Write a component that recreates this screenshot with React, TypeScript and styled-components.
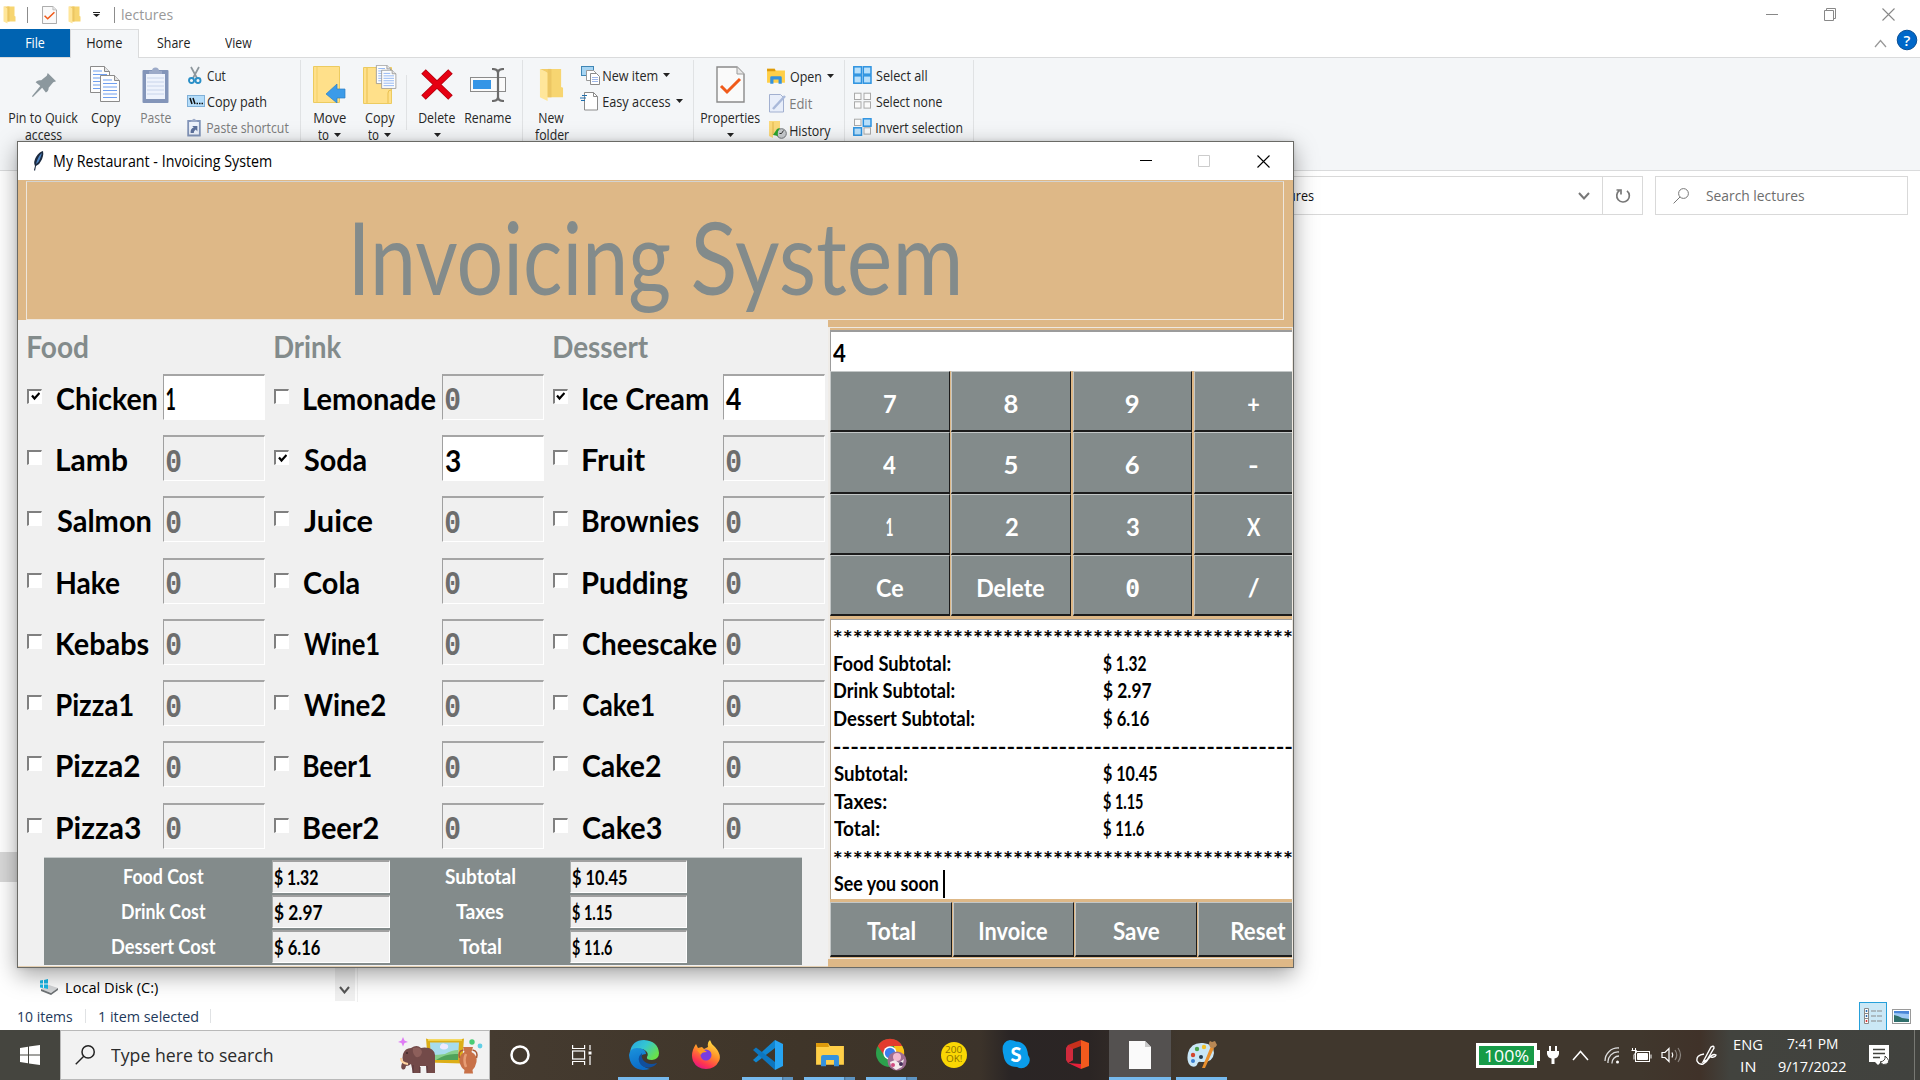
import React, { useLayoutEffect, useRef, useState } from "react";
import styled, { createGlobalStyle, css } from "styled-components";

const UI = '"Open Sans", "Noto Sans", sans-serif';
const TK = 'Lato, "Open Sans", sans-serif';
const MONO = '"Liberation Mono", "DejaVu Sans Mono", monospace';
const WOOD = "#deb887";
const AZURE = "#838b8b";

const Global = createGlobalStyle`
  * { box-sizing: border-box; }
  body { margin: 0; width: 1920px; height: 1080px; overflow: hidden; background: #fff; font-family: ${UI}; font-size: 15px; color: #1e1e1e; }
  svg { display: block; flex: none; }
`;

/* ---------- text that is set to an exact ink width ---------- */
const TextBox = styled.span<{ $w: number; $ml?: number }>`
  display: block;
  flex: none;
  width: ${(p) => p.$w}px;
  margin-left: ${(p) => p.$ml ?? 0}px;
  line-height: 0;
  white-space: pre;
`;
const TextInk = styled.span<{ $size: number; $color?: string; $family?: string; $weight?: number; $lh?: number }>`
  display: inline-block;
  vertical-align: top;
  transform-origin: 0 50%;
  font-family: ${(p) => p.$family ?? UI};
  font-size: ${(p) => p.$size}px;
  font-weight: ${(p) => p.$weight ?? 400};
  line-height: ${(p) => p.$lh ?? 17}px;
  color: ${(p) => p.$color ?? "inherit"};
`;
type TProps = { w: number; ml?: number; dy?: number; size?: number; color?: string; family?: string; weight?: number; lh?: number; children: string };
function T({ w, ml, dy = 0, size = 15, color, family, weight, lh, children }: TProps) {
  const ref = useRef<HTMLSpanElement>(null);
  const [tf, setTf] = useState("none");
  useLayoutEffect(() => {
    const cs = getComputedStyle(ref.current!);
    const ctx = document.createElement("canvas").getContext("2d")!;
    ctx.font = `${cs.fontWeight} ${cs.fontSize} ${cs.fontFamily}`;
    const m = ctx.measureText(children);
    const k = w / (m.actualBoundingBoxLeft + m.actualBoundingBoxRight);
    setTf(`translate(${m.actualBoundingBoxLeft * k}px, ${dy}px) scaleX(${k})`);
  }, [w, dy, children]);
  return (
    <TextBox $w={w} $ml={ml}>
      <TextInk ref={ref} $size={size} $color={color} $family={family} $weight={weight} $lh={lh} style={{ transform: tf }}>
        {children}
      </TextInk>
    </TextBox>
  );
}

/* ---------- explorer ---------- */
const Desktop = styled.div`
  position: relative;
  display: flex;
  flex-direction: column;
  width: 1920px;
  height: 1080px;
  overflow: hidden;
  background: #fff;
`;
const Bar = styled.div<{ $h: number }>`
  display: flex;
  flex: none;
  height: ${(p) => p.$h}px;
`;
const TitleBar = styled(Bar)`
  align-items: center;
  padding: 0 25px 0 3px;
`;
const Gap = styled.div<{ $w?: number; $h?: number }>`
  flex: ${(p) => (p.$w === undefined && p.$h === undefined ? "1" : "none")};
  width: ${(p) => p.$w ?? 0}px;
  height: ${(p) => p.$h ?? 0}px;
`;
const VLine = styled.div<{ $h: number; $c?: string }>`
  flex: none;
  width: 1px;
  height: ${(p) => p.$h}px;
  background: ${(p) => p.$c ?? "#e0e2e4"};
`;
const TabRow = styled(Bar)`
  border-bottom: 1px solid #dadbdc;
`;
const Tab = styled.div<{ $w: number; $kind?: "file" | "active" }>`
  display: flex;
  justify-content: center;
  width: ${(p) => p.$w}px;
  padding-top: 5px;
  ${(p) => p.$kind === "file" && css`background: #0063b1; color: #fff;`}
  ${(p) => p.$kind === "active" && css`background: #f4f6f8; border: 1px solid #dadbdc; border-bottom: 0; margin-bottom: -1px; padding-top: 4px;`}
`;
const Ribbon = styled(Bar)`
  background: #f4f6f8;
  border-bottom: 1px solid #dadbdc;
  padding-top: 2px;
`;
const Group = styled.div<{ $w: number }>`
  display: flex;
  width: ${(p) => p.$w}px;
  border-right: 1px solid #e0e2e4;
`;
const BigBtn = styled.div<{ $w: number; $muted?: boolean }>`
  display: flex;
  flex-direction: column;
  align-items: center;
  flex: none;
  width: ${(p) => p.$w}px;
  color: ${(p) => (p.$muted ? "#7c7c7c" : "#262626")};
`;
const BigIcon = styled.div`
  display: flex;
  align-items: center;
  justify-content: center;
  height: 49px;
  margin-bottom: -2px;
`;
const Caption = styled.div`
  display: flex;
  align-items: center;
  gap: 5px;
  height: 17px;
`;
const Collapse = styled.div`
  display: flex;
  align-items: center;
`;
const SmallCol = styled.div<{ $pt?: number; $pitch?: number }>`
  display: flex;
  flex-direction: column;
  gap: ${(p) => (p.$pitch ?? 26) - 20}px;
  padding-top: ${(p) => p.$pt ?? 5}px;
`;
const SmallBtn = styled.div<{ $muted?: boolean }>`
  display: flex;
  align-items: center;
  height: 20px;
  color: ${(p) => (p.$muted ? "#7c7c7c" : "#262626")};
`;
const SmallIcon = styled.div<{ $w: number }>`
  display: flex;
  justify-content: flex-start;
  width: ${(p) => p.$w}px;
`;
const NavRow = styled(Bar)`
  padding: 5px 12px 0 15px;
  justify-content: flex-end;
  gap: 12px;
`;
const Address = styled.div`
  display: flex;
  align-items: center;
  width: 1443px;
  height: 39px;
  border: 1px solid #d9d9d9;
`;
const Refresh = styled.div`
  display: flex;
  align-items: center;
  justify-content: center;
  width: 40px;
  height: 37px;
  border-left: 1px solid #d9d9d9;
`;
const Search = styled.div`
  display: flex;
  align-items: center;
  width: 253px;
  height: 39px;
  padding-left: 17px;
  border: 1px solid #d9d9d9;
`;
const Content = styled.div`
  display: flex;
  flex: 1;
`;
const Tree = styled.div`
  display: flex;
  flex-direction: column;
  justify-content: flex-end;
  width: 335px;
`;
const SelectedRow = styled.div`
  height: 30px;
  margin-bottom: 90px;
  background: #d9d9d9;
`;
const TreeRow = styled.div`
  display: flex;
  align-items: center;
  height: 30px;
  padding-left: 39px;
  color: #000;
`;
const ScrollTrack = styled.div`
  display: flex;
  align-items: flex-end;
  justify-content: center;
  width: 20px;
  margin-bottom: 1px;
  padding: 0 1px 7px 0;
  background: #f0f0f0;
`;
const PaneEdge = styled.div`
  width: 3px;
  border-right: 1px solid #f0f0f0;
`;
const Status = styled(Bar)`
  align-items: center;
  padding: 0 9px 0 18px;
  color: #1e395b;
`;
const ViewBtn = styled.div`
  display: flex;
  align-items: center;
  justify-content: center;
  width: 28px;
  height: 29px;
  margin-right: 5px;
  border: 1px solid #26a0da;
  background: #cbe8f6;
`;

/* ---------- Tk window ---------- */
const TkWindow = styled.div`
  position: absolute;
  left: 17px;
  top: 141px;
  width: 1277px;
  height: 827px;
  display: flex;
  flex-direction: column;
  border: 1px solid #6a6a66;
  background: #f0f0f0;
  box-shadow: 0 7px 22px rgba(0, 0, 0, 0.36), 0 0 4px rgba(0, 0, 0, 0.12);
`;
const TkTitle = styled(Bar)`
  align-items: center;
  padding: 0 23px 0 14px;
  background: #fff;
  color: #000;
`;
const Header = styled.div`
  height: 140px;
  padding: 1px 9px 0 8px;
  background: ${WOOD};
`;
const HeaderFrame = styled.div`
  display: flex;
  gap: 23px;
  height: 139px;
  border: 1px solid #eee6dc;
  padding: 14px 0 0 328px;
  border-top-color: #d3d3d1;
`;
const Body = styled.div`
  display: flex;
  flex: 1;
  min-height: 0;
`;
const Left = styled.div`
  display: flex;
  flex-direction: column;
  width: 810px;
  border-bottom: 1px solid #e3cfb2;
`;
const Menus = styled.div`
  display: flex;
  height: 537px;
  padding-left: 9px;
`;
const Menu = styled.div<{ $w: number }>`
  display: flex;
  flex-direction: column;
  gap: 15.24px;
  width: ${(p) => p.$w}px;
`;
const MenuHead = styled.div`
  height: 38.76px;
  padding: 6px 0 0 1px;
`;
const Item = styled.div`
  display: flex;
  flex: none;
  align-items: center;
  height: 46px;
`;
const Check = styled.div`
  display: flex;
  align-items: center;
  justify-content: center;
  width: 15px;
  height: 15px;
  margin: -1px 15px 0 0;
  border: 1px solid #fff;
  border-top: 2px solid #808080;
  border-left: 2px solid #808080;
  background: #fff;
`;
const ItemName = styled.div<{ $w: number }>`
  width: ${(p) => p.$w}px;
`;
const Entry = styled.div<{ $on: boolean }>`
  display: flex;
  align-items: center;
  width: 102px;
  height: 46px;
  padding-left: 2px;
  border: 1px solid #fff;
  border-top: 2px solid #a5a5a5;
  border-left: 1px solid #a0a0a0;
  background: ${(p) => (p.$on ? "#fff" : "#f0f0f0")};
`;
const Costs = styled.div`
  display: grid;
  grid-template-columns: 228px 117.5px 180px 117.5px;
  grid-auto-rows: 33px;
  row-gap: 2px;
  width: 758px;
  height: 108px;
  margin-left: 26px;
  padding-top: 2px;
  border-top: 1px solid #c5caca;
  background: ${AZURE};
`;
const CostLabel = styled.div<{ $pl?: number }>`
  display: flex;
  align-items: center;
  justify-content: center;
  padding-left: ${(p) => p.$pl ?? 0}px;
`;
const CostBox = styled.div`
  display: flex;
  align-items: center;
  padding-left: 1px;
  border: 1px solid #fff;
  border-top: 2px solid #a0a0a0;
  border-left-color: #a8acac;
  background: #f0f0f0;
`;
const Right = styled.div`
  display: flex;
  flex-direction: column;
  width: 465px;
  padding-top: 7px;
  background: ${WOOD};
`;
const Calc = styled.div`
  display: flex;
  flex-direction: column;
  height: 632px;
  border: 1px solid #eee8e0;
  border-left: 2px solid #efece8;
  padding-top: 2px;
  overflow: hidden;
`;
const Display = styled.div`
  flex: none;
  height: 41px;
  padding: 2px 0 0 2px;
  border-top: 2px solid #9c9c9c;
  border-left: 1px solid #9c9c9c;
  background: #fff;
`;
const Keys = styled.div<{ $w: number; $h: number; $gap: number }>`
  display: grid;
  flex: none;
  grid-template-columns: repeat(4, ${(p) => p.$w}px);
  grid-auto-rows: ${(p) => p.$h}px;
  column-gap: ${(p) => p.$gap}px;
`;
const Key = styled.div`
  display: flex;
  align-items: center;
  justify-content: center;
  padding-top: 4px;
  border-top: 1px solid #c3c7c7;
  border-left: 1px solid #c3c7c7;
  border-right: 1px solid #1c1c1c;
  border-bottom: 2px solid #1c1c1c;
  background: ${AZURE};
`;
const Receipt = styled.div`
  flex: none;
  height: 280px;
  margin: 3px 0;
  padding: 2px 0 0 2px;
  border-top: 1px solid #a0a0a0;
  border-left: 1px solid #b5a58f;
  background: #fff;
`;
const Line = styled.div`
  display: flex;
  height: 27.6px;
`;
const LineLabel = styled.div`
  width: 270px;
`;
const Caret = styled.div`
  width: 2px;
  height: 28px;
  margin-left: 4px;
  background: #000;
`;

/* ---------- taskbar ---------- */
const Taskbar = styled(Bar)`
  background: linear-gradient(90deg, #484942 0, #46423a 60px, #453b30 489px, #3f3529 800px, #3c332a 980px, #2a2525 1010px, #2b2524 1090px, #40372d 1180px, #40372d 1640px, #403229 1700px, #42433e 1730px, #41423e 100%);
  color: #fff;
`;
const Start = styled.div`
  display: flex;
  align-items: center;
  justify-content: center;
  width: 60px;
  background: #45453f;
`;
const TaskSearch = styled.div`
  display: flex;
  align-items: center;
  width: 429.500px;
  margin-right: -1px;
  padding-left: 14px;
  border: 1px solid #b9b9b9;
  background: #f2f2f2;
  color: #2b2b2b;
`;
const Task = styled.div<{ $run?: "one" | "many"; $active?: boolean }>`
  display: flex;
  align-items: center;
  justify-content: center;
  width: 62px;
  height: 50px;
  padding-bottom: 1px;
  background-repeat: no-repeat;
  background-color: ${(p) => (p.$active ? "#545150" : "transparent")};
  background-size: ${(p) => (p.$active ? "100%" : "51px")} 3px;
  background-position: 50% 100%;
  ${(p) => p.$run === "one" && css`background-image: linear-gradient(#76b9ed, #76b9ed);`}
  ${(p) => p.$run === "many" && css`background-image: linear-gradient(90deg, #76b9ed 40px, #4a6d8a 40px, #5d93c0 42px);`}
`;
const Tray = styled.div`
  display: flex;
  align-items: center;
  margin-left: auto;
`;
const Battery = styled.div`
  display: flex;
  align-items: center;
  justify-content: center;
  width: 61px;
  height: 25px;
  border: 3px solid #fff;
  background: #179b48;
`;
const Nub = styled.div`
  width: 3px;
  height: 11px;
  background: #fff;
`;
const Stack = styled.div<{ $w: number; $gap: number }>`
  display: flex;
  flex-direction: column;
  align-items: center;
  gap: ${(p) => p.$gap}px;
  width: ${(p) => p.$w}px;
`;

/* ---------- icons ---------- */
const Folder = ({ w = 13, h = 18 }: { w?: number; h?: number }) => (
  <svg width={w} height={h} viewBox="0 0 26 36" preserveAspectRatio="none">
    <path d="M8 1h15v19l2 1v10H8z" fill="#f7d571" />
    <path d="M1 1l8 4v30l-8-4z" fill="#ffe69a" />
    <path d="M9 5V1H1z" fill="#f3cd68" />
    <path d="M9 5v26h4V1H9z" fill="#ecc663" />
  </svg>
);
const Down = ({ w = 7 }: { w?: number }) => (
  <svg width={w} height="4" viewBox="0 0 7 4"><path d="M0 0h7L3.5 4z" fill="#222" /></svg>
);
const DocCheck = ({ w, h }: { w: number; h: number }) => (
  <svg width={w} height={h} viewBox="0 0 29 37" preserveAspectRatio="none">
    <path d="M1 1h20l7 7v28H1z" fill="#fafafa" stroke="#8a8a8a" strokeWidth="1.4" />
    <path d="M21 1v7h7" fill="#e8e8e8" stroke="#9a9a9a" />
    <path d="M5 20l6 6L24 13" fill="none" stroke="#f05a1a" strokeWidth="3" />
  </svg>
);
const Pin = () => (
  <svg width="26" height="26" viewBox="0 0 28 28">
    <path d="M18 1l9 9-3 1-5 6c0 3-1 4-3 5l-4-5L2 27l-1-1 9-11-5-4c2-2 4-2 6-2l6-5z" fill="#8c989e" />
  </svg>
);
const Page = ({ x, y }: { x: number; y: number }) => (
  <g transform={`translate(${x} ${y})`}>
    <path d="M.5.5h14l5 5v21H.5z" fill="#fdfdfd" stroke="#8b8b8b" />
    <path d="M14.500.5v5h5" fill="#e3e3e3" stroke="#8b8b8b" />
    <path d="M3 5h9M3 8.500h14M3 12h14M3 15.500h14M3 19h14M3 22.500h14" stroke="#6f9ff0" />
  </g>
);
const CopyIcon = () => (
  <svg width="31" height="37" viewBox="0 0 31 37"><Page x={0} y={0} /><Page x={10} y={9} /></svg>
);
const Clipboard = ({ w = 27, h = 38, link }: { w?: number; h?: number; link?: boolean }) => (
  <svg width={w} height={h} viewBox="0 0 27 38" preserveAspectRatio="none">
    <rect x=".5" y="4" width="26" height="33" rx="1" fill="#8395b9" />
    <rect x="4" y="8" width="19" height="25" fill="#eef3fc" />
    <path d="M7 8V5h3a3.500 3.500 0 0 1 7 0h3v3z" fill="#9caac8" />
    {link ? <path d="M7 30q-1-9 6-11l-3-3h10v11l-3-4q-4 2-4 7z" fill="#5d719c" /> : <path d="M5 12h17M5 16h17M5 20h17M5 24h17M5 28h17" stroke="#c8d4ea" />}
  </svg>
);
const CutIcon = () => (
  <svg width="14" height="19" viewBox="0 0 14 19" fill="none">
    <path d="M3 1l6 11M11 1L5 12" stroke="#8d979d" strokeWidth="1.700" />
    <circle cx="3.500" cy="14.500" r="2.500" stroke="#2a8fc7" strokeWidth="1.900" />
    <circle cx="10" cy="14.500" r="2.500" stroke="#2a8fc7" strokeWidth="1.900" />
  </svg>
);
const PathIcon = () => (
  <svg width="18" height="12" viewBox="0 0 18 12">
    <rect x=".5" y=".5" width="17" height="11" fill="#b5ddfa" stroke="#7fb0d8" />
    <path d="M3 3l2 6M6 3l2 6" stroke="#111" strokeWidth="1.500" />
    <path d="M9.500 8.500h1.500M12 8.500h1.500M14.500 8.500H16" stroke="#111" strokeWidth="1.500" />
  </svg>
);
const MoveIcon = () => (
  <svg width="33" height="37" viewBox="0 0 33 37">
    <path d="M.5.5h26v36H.5z" fill="#ffe08a" stroke="#eccb60" />
    <path d="M4 1v35" stroke="#f2cf67" />
    <path d="M13 28l11-10v5h8v9h-8v5z" fill="#3c9be8" stroke="#2c7fc4" strokeWidth=".7" />
  </svg>
);
const CopyToIcon = () => (
  <svg width="34" height="39" viewBox="0 0 34 39">
    <path d="M.5 2.500h28v36H.5z" fill="#ffe08a" stroke="#eccb60" />
    <path d="M4 3v35M25 38V28q0-3 3-3" stroke="#e9bf4e" fill="none" />
    <g transform="translate(13 0) scale(.75 .7)"><Page x={0} y={0} /><Page x={7} y={7} /></g>
  </svg>
);
const DeleteIcon = () => (
  <svg width="32" height="31" viewBox="0 0 32 31"><path d="M2.500 2.500l27 26M29.500 2.500l-27 26" stroke="#b3000f" strokeWidth="6.500" /><path d="M3 3l26 25M29 3L3 28" stroke="#e60012" strokeWidth="4.800" /></svg>
);
const RenameIcon = () => (
  <svg width="36" height="34" viewBox="0 0 36 34" fill="none">
    <rect x=".5" y="9.500" width="35" height="14" fill="#fafafa" stroke="#8b8b8b" />
    <rect x="3" y="12" width="18" height="9" fill="#3595e6" />
    <path d="M28 4v26M22 1c4 0 6 1 6 4 0-3 2-4 6-4M22 33c4 0 6-1 6-4 0 3 2 4 6 4" stroke="#6b6b6b" strokeWidth="2.200" />
  </svg>
);
const NewItemIcon = () => (
  <svg width="19" height="19" viewBox="0 0 19 19">
    <rect x=".5" y=".5" width="12" height="9" fill="#a7d5f3" stroke="#3f86b5" />
    <path d="M5.500 4.500h7l3 3v7h-10z" fill="#fff" stroke="#999" />
    <path d="M9.500 7.500h6l3 3v8h-9z" fill="#fff" stroke="#8b8b8b" />
    <path d="M11 11.500h6M11 13.500h6M11 15.500h6" stroke="#9db6e8" />
  </svg>
);
const EasyIcon = () => (
  <svg width="19" height="19" viewBox="0 0 19 19">
    <path d="M4.500.5h9l4 4v13.500h-13z" fill="#fff" stroke="#8b8b8b" />
    <path d="M13.500.5v4h4" fill="none" stroke="#8b8b8b" />
    <path d="M2 3.500h5M0 6h6M1 8.500h4" stroke="#1f6fae" strokeWidth="1.200" />
  </svg>
);
const OpenIcon = ({ s = 18 }: { s?: number }) => (
  <svg width={s} height={s * 0.87} viewBox="0 0 28 24.500">
    <path d="M0 1h12l2 3h14v19H0z" fill="#ffcf48" />
    <path d="M0 1h12l1 4H0z" fill="#dd9a0c" />
    <path d="M5 24.500V15q0-2 2-2h14q2 0 2 2v9.500h-5V18H10v6.500z" fill="#3592dd" />
  </svg>
);
const EditIcon = () => (
  <svg width="18" height="19" viewBox="0 0 18 19">
    <path d="M.5.5h11l3 3v14.500H.5z" fill="#e8eefa" stroke="#a2b0d0" />
    <path d="M4 15L16 2" stroke="#a9b9da" strokeWidth="2.500" />
  </svg>
);
const HistoryIcon = () => (
  <svg width="18" height="18" viewBox="0 0 18 18">
    <path d="M0 0h11v14H4v3L0 15z" fill="#fbd97b" />
    <path d="M4 1v13" stroke="#e2b64b" />
    <circle cx="12.500" cy="12.500" r="4.800" fill="#c9cccf" stroke="#707478" />
    <path d="M12.500 12.500l2-3M12.500 12.500h-2" stroke="#333" />
    <path d="M4 14l4-6q2-1 3-1-3 3-2 8z" fill="#2ba52f" />
  </svg>
);
const Squares = ({ on }: { on: string }) => (
  <svg width="19" height="18" viewBox="0 0 19 18">
    {[0, 1, 2, 3].map((i) => {
      const hit = on[i] === "1";
      return (
        <rect key={i} x={(i % 2) * 9.500 + (hit ? 0.8 : 1.500)} y={i > 1 ? 9.800 : hit ? 0.8 : 1.200} width={hit ? 7.700 : 6.500} height={hit ? 7.400 : 6.300}
          fill={hit ? "#b9e0fb" : "#fafafa"} stroke={hit ? "#2c92e0" : "#a9a9a9"} strokeWidth={hit ? 1.500 : 1} />
      );
    })}
  </svg>
);
const Lens = ({ s, c, sw = 1 }: { s: number; c: string; sw?: number }) => (
  <svg width={s} height={s} viewBox="0 0 16 16" fill="none" stroke={c} strokeWidth={sw}><circle cx="10.500" cy="5.500" r="4.900" /><path d="M7 9L.6 15.400" /></svg>
);
const Chevron = ({ w, h, c, sw, up }: { w: number; h: number; c: string; sw: number; up?: boolean }) => (
  <svg width={w} height={h} viewBox={`0 0 ${w} ${h}`} fill="none" stroke={c} strokeWidth={sw}>
    <path d={up ? `M1 ${h - 1}L${w / 2} 1.500L${w - 1} ${h - 1}` : `M1 1L${w / 2} ${h - 1.500}L${w - 1} 1`} />
  </svg>
);
const WinMin = ({ c }: { c: string }) => <svg width="12" height="12"><path d="M0 5.500h12" stroke={c} /></svg>;
const WinX = ({ c }: { c: string }) => <svg width="13" height="13" fill="none"><path d="M.5.5l12 12M12.500.5l-12 12" stroke={c} strokeWidth="1.100" /></svg>;
const Feather = () => (
  <svg width="12" height="20" viewBox="0 0 12 20">
    <path d="M11 0q1 5-2 10-1 3-5 5l-1 5-1-1 1-4q-2-4 1-9T11 0z" fill="#1b2a3f" />
    <path d="M10 2Q6 5 4 13q3-2 4-5t2-6z" fill="#4f86c6" />
  </svg>
);
const DiskIcon = () => (
  <svg width="20" height="16" viewBox="0 0 20 16">
    <path d="M2 10l8-4 9 3-7 5z" fill="#d5d7d9" />
    <path d="M2 10l10 4v2L2 12zM12 14l7-5v2l-7 5z" fill="#6e7275" />
    <path d="M1 1.500l3-.5v3.500H1zM5 1l4-1v4.500H5zM1 5.500h3V9l-3-.5zM5 5.500h4v4.500L5 9z" fill="#17b8e8" />
  </svg>
);
const Elephant = () => (
  <svg width="86" height="37" viewBox="0 0 86 37">
    <path d="M5 0l1.500 3.500L10 5 6.500 6 5 9.500 3.500 6 0 5l3.500-1.500z" fill="#df7cf5" />
    <path d="M28 1.500l3 1h31l4-1-2 25-17-.5-17-.5z" fill="#dcae17" />
    <path d="M30 3h34" stroke="#f8dc5a" strokeWidth="1.500" />
    <path d="M32 5.500h29l-1 17.500H33z" fill="#a7dcee" />
    <path d="M42 9q2-4 5-2 4 0 3 4-4 3-8 0z" fill="#efeaff" />
    <path d="M33 18q8 0 14-1 7-4 13-4v10H33z" fill="#86cf8b" />
    <path d="M38 23q10-7 22-6v6z" fill="#4fa35b" />
    <path d="M37 22q1-9-6-11-5-1-8 0-4-4-10 0-6 0-8 6-1 4 0 7-3 6-1 8 3 2 4-3 3 0 5-2l2 9h7v-7h6l1 7h8z" fill="#734a49" />
    <path d="M15 36v-8M22 30v6M29 29v7" stroke="#56343a" />
    <path d="M15 11q8-2 9 4-1 6-6 5-4-3-3-9z" fill="#8d5f5b" />
    <circle cx="9" cy="16" r=".8" fill="#1d1012" />
    <path d="M3 21q0 5 7 6" stroke="#ffd3a0" strokeWidth="2" fill="none" />
    <path d="M65 10h10l-1.500 5q6 3 5 10-1 5-4 8l.5 3.500h-9l.5-3.500q-4-3-5-8-1-7 5-10z" fill="#c87148" />
    <path d="M65.500 13q-6 1-4 8M74.500 13q6 1 4 8" stroke="#a95a36" strokeWidth="1.500" fill="none" />
    <path d="M68 17q-3 6 0 13" stroke="#e79c74" strokeWidth="2.500" fill="none" />
    <circle cx="74" cy="5" r="2.700" fill="#49cc76" /><circle cx="82" cy="9" r="2.400" fill="#62cfe6" />
  </svg>
);
const StartIcon = () => (
  <svg width="20" height="20" viewBox="0 0 20 20" fill="#fff"><path d="M0 3l8-1.200V9.500H0zM9 1.600L20 0v9.500H9zM0 10.500h8v7.700L0 17zM9 10.500h11V20L9 18.400z" /></svg>
);
const TaskView = () => (
  <svg width="20" height="20" viewBox="0 0 20 20" fill="none" stroke="#fff" strokeWidth="1.200">
    <rect x=".6" y="6" width="12" height="8" /><path d="M.6 0v3.500h12V0M.6 20v-3.500h12V20M18 0v5M18 11v9" /><path d="M16.500 6.500h3v3h-3z" fill="#fff" stroke="none" />
  </svg>
);
const Edge = () => (
  <svg width="30" height="30" viewBox="0 0 30 30">
    <defs>
      <linearGradient id="eg" x1="0" y1="0" x2="1" y2=".6"><stop offset="0" stopColor="#28a4e2" /><stop offset=".5" stopColor="#34c6d2" /><stop offset="1" stopColor="#69e24a" /></linearGradient>
      <linearGradient id="eb" x1="0" y1="0" x2=".3" y2="1"><stop offset="0" stopColor="#1b93dc" /><stop offset="1" stopColor="#0b6cc8" /></linearGradient>
    </defs>
    <path d="M1 12Q3 0 15 0q14 1 15 13 0 6-7 7-6 0-5-3 2-3-1-6-5-5-16 1z" fill="url(#eg)" />
    <path d="M0 15Q1 8 8 8q9 0 9 6-7 0-6 7 1 6 10 8-4 1-7 1Q1 29 0 15z" fill="url(#eb)" />
    <path d="M13 13q-6 5-1 12 6 5 13 1 3-2 3-3-9 3-14-3-2-3-1-7z" fill="#114f9c" />
  </svg>
);
const Firefox = () => (
  <svg width="28" height="29" viewBox="0 0 28 29">
    <defs><linearGradient id="ff" x1=".8" y1="0" x2=".3" y2="1"><stop offset="0" stopColor="#ffe94a" /><stop offset=".45" stopColor="#ff9328" /><stop offset=".8" stopColor="#ff3550" /><stop offset="1" stopColor="#e31587" /></linearGradient></defs>
    <path d="M4 4l2 4 4-1 2 2 4-2q-1-5 2-7 1 4 5 7 7 8 4 14-4 8-13 8T1 21q-3-8 3-17z" fill="url(#ff)" />
    <circle cx="14" cy="15" r="5.500" fill="#7a3ce0" />
    <path d="M5 10q6-2 10 2-6 0-6 3z" fill="#ff9a1f" />
  </svg>
);
const VSCode = () => (
  <svg width="30" height="30" viewBox="0 0 30 30">
    <path d="M0 20l3 2.500L22 8V0z" fill="#1186d0" />
    <path d="M0 10l3-2.500L22 22v8z" fill="#0d76bf" />
    <path d="M22 0l8 4v22l-8 4z" fill="#27a4f2" />
  </svg>
);
const Chrome = () => (
  <svg width="31" height="33" viewBox="0 0 31 33">
    <circle cx="14" cy="15" r="14" fill="#2ca04c" />
    <path d="M1.800 8A14 14 0 0 1 26.200 8H14l-5.500 10z" fill="#e33b2e" />
    <path d="M26.200 8A14 14 0 0 1 14 29l6-11-2-10z" fill="#fbc116" />
    <circle cx="14" cy="15" r="6.700" fill="#fff" /><circle cx="14" cy="15" r="5.200" fill="#3b7ded" />
    <circle cx="21" cy="23" r="9.500" fill="#9d6d92" /><circle cx="21" cy="19" r="4" fill="#f2b9cf" /><path d="M14 24l5-2 4 3 5-4-2 8-6 3-5-4z" fill="#f4ecec" /><circle cx="25" cy="26" r="2" fill="#46315a" /><circle cx="17" cy="27" r="2" fill="#d14b80" />
  </svg>
);
const OkBadge = styled.div`
  display: flex;
  flex-direction: column;
  align-items: center;
  justify-content: center;
  width: 26px;
  height: 26px;
  border-radius: 50%;
  background: #fad704;
`;
const Skype = () => (
  <svg width="28" height="29" viewBox="0 0 28 29"><path d="M8 0q4 0 6 1.500Q25 2 26 15q4 6-1 11-5 4-10 1Q3 27 1.500 15-2 2 8 0z" fill="#0a9cea" /><text x="14" y="21.500" textAnchor="middle" fontFamily="Lato" fontWeight="900" fontSize="20" fill="#fff">S</text></svg>
);
const Office = () => (
  <svg width="23" height="29" viewBox="0 0 23 29"><path d="M15 0L2 5v18l5-3V9l8-3z" fill="#c8301c" /><path d="M15 0l8 3v23l-8 3z" fill="#f25a1d" /><path d="M2 23l13 6v-5z" fill="#e8203a" /><path d="M2 5L0 8v12l2 3 5-3V9z" fill="#d02a3c" /></svg>
);
const DocWhite = () => (
  <svg width="22" height="28" viewBox="0 0 22 28"><path d="M0 0h16l6 6v22H0z" fill="#fafafa" /><path d="M16 0v6h6z" fill="#c9c9c9" /></svg>
);
const Paint = () => (
  <svg width="30" height="29" viewBox="0 0 30 29">
    <path d="M16 3Q4 2 1 13q-2 9 3 13 4 2 6-1 1-4 4-3 12 1 13-9 0-9-11-10z" fill="#c9e6f6" />
    <circle cx="6" cy="15" r="2.200" fill="#d2452d" /><circle cx="10" cy="9" r="2.200" fill="#4da34d" /><circle cx="17" cy="7" r="2.200" fill="#f1c02a" /><circle cx="14" cy="17" r="2" fill="#263b4d" /><circle cx="6" cy="21" r="2" fill="#3a7fd0" />
    <path d="M15 28L24 6l3 2-9 20z" fill="#e9902e" /><path d="M23 7q-2-4 0-6l2 1 3-1 2 4q-2 4-5 3z" fill="#b98855" />
  </svg>
);

/* ---------- data ---------- */
type Row = [string, number, string];
const menus: { head: string; hw: number; w: number; name: number; rows: Row[] }[] = [
  { head: "Food", hw: 60, w: 247.3, name: 105.5, rows: [["Chicken", 100, "1"], ["Lamb", 70, "0"], ["Salmon", 94, "0"], ["Hake", 63, "0"], ["Kebabs", 92, "0"], ["Pizza1", 76, "0"], ["Pizza2", 83, "0"], ["Pizza3", 83, "0"]] },
  { head: "Drink", hw: 67, w: 278.7, name: 137.5, rows: [["Lemonade", 132, "0"], ["Soda", 62, "3"], ["Juice", 69, "0"], ["Cola", 55, "0"], ["Wine1", 75, "0"], ["Wine2", 82, "0"], ["Beer1", 67, "0"], ["Beer2", 75, "0"]] },
  { head: "Dessert", hw: 94, w: 275, name: 140, rows: [["Ice Cream", 125, "4"], ["Fruit", 62, "0"], ["Brownies", 116, "0"], ["Pudding", 105, "0"], ["Cheescake", 134, "0"], ["Cake1", 71, "0"], ["Cake2", 78, "0"], ["Cake3", 78, "0"]] },
];
const costs: [string, number, string, number, string, number, string, number][] = [
  ["Food Cost", 80, "$ 1.32", 44, "Subtotal", 70, "$ 10.45", 55],
  ["Drink Cost", 84, "$ 2.97", 48, "Taxes", 48, "$ 1.15", 40],
  ["Dessert Cost", 104, "$ 6.16", 46, "Total", 42, "$ 11.6", 40],
];
const keys: [string, number][] = [
  ["7", 12], ["8", 13], ["9", 13], ["+", 11], ["4", 13], ["5", 13], ["6", 13], ["-", 9],
  ["1", 7], ["2", 13], ["3", 13], ["X", 14], ["Ce", 27], ["Delete", 66], ["0", 13], ["/", 12],
];
const actions: [string, number][] = [["Total", 48], ["Invoice", 67], ["Save", 46], ["Reset", 54]];
const receipt: [string, number, string?, number?][] = [
  ["*".repeat(46), 458.5], ["Food Subtotal:", 117, "$ 1.32", 43], ["Drink Subtotal:", 121, "$ 2.97", 48], ["Dessert Subtotal:", 141, "$ 6.16", 46],
  ["-".repeat(53), 458.5], ["Subtotal:", 74, "$ 10.45", 54], ["Taxes:", 53, "$ 1.15", 40], ["Total:", 46, "$ 11.6", 41], ["*".repeat(46), 458.5], ["See you soon", 105],
];

function Explorer() {
  return (
    <>
      <TitleBar $h={29}>
        <Folder /><Gap $w={11} /><VLine $h={16} $c="#8c8c8c" /><Gap $w={14} />
        <DocCheck w={15} h={18} /><Gap $w={11} /><Folder /><Gap $w={12} />
        <svg width="7" height="5"><path d="M0 0h7v1H0zM0 2h7L3.500 5z" fill="#222" /></svg>
        <Gap $w={14} /><VLine $h={16} $c="#8c8c8c" /><Gap $w={7} />
        <T w={51} color="#999">lectures</T>
        <Gap />
        <WinMin c="#888" /><Gap $w={46} />
        <svg width="12" height="13" fill="none" stroke="#888"><path d="M.5 2.500h9v10h-9zM2.500 2.500v-2h9v10h-2" /></svg>
        <Gap $w={46} /><WinX c="#888" />
      </TitleBar>
      <TabRow $h={29}>
        <Tab $w={70} $kind="file"><T w={18.500}>File</T></Tab>
        <Tab $w={69} $kind="active"><T w={35}>Home</T></Tab>
        <Tab $w={69}><T w={33}>Share</T></Tab>
        <Tab $w={61}><T w={27}>View</T></Tab>
        <Gap />
        <Collapse><Chevron w={13} h={9} c="#999" sw={1.300} up /></Collapse>
        <Gap $w={9} />
        <svg width="22" height="22" viewBox="0 0 22 22"><circle cx="11" cy="11" r="9.800" fill="#0067c9" stroke="#0b4f95" /><text x="11" y="16.500" textAnchor="middle" fontFamily="Open Sans" fontWeight="600" fontSize="15" fill="#fff">?</text></svg>
        <Gap $w={2} />
      </TabRow>
      <Ribbon $h={113}>
        <Group $w={301}>
          <BigBtn $w={87}><BigIcon><Pin /></BigIcon><Gap $h={2} /><Caption><T w={69}>Pin to Quick</T></Caption><Caption><T w={37}>access</T></Caption></BigBtn>
          <BigBtn $w={37}><BigIcon><CopyIcon /></BigIcon><Gap $h={2} /><Caption><T w={30}>Copy</T></Caption></BigBtn>
          <BigBtn $w={63} $muted><BigIcon><Clipboard /></BigIcon><Gap $h={2} /><Caption><T w={30}>Paste</T></Caption></BigBtn>
          <SmallCol>
            <SmallBtn><Gap $w={1} /><SmallIcon $w={19}><CutIcon /></SmallIcon><T w={18.500}>Cut</T></SmallBtn>
            <SmallBtn><Gap $w={-2} /><SmallIcon $w={20}><PathIcon /></SmallIcon><T w={59}>Copy path</T></SmallBtn>
            <SmallBtn $muted><SmallIcon $w={20}><Clipboard w={14} h={19} link /></SmallIcon><T w={81.500}>Paste shortcut</T></SmallBtn>
          </SmallCol>
        </Group>
        <Group $w={222}>
          <Gap $w={5} />
          <BigBtn $w={47}><BigIcon><MoveIcon /></BigIcon><Gap $h={2} /><Caption><T w={32}>Move</T></Caption><Caption><T w={11}>to</T><Down /></Caption></BigBtn>
          <BigBtn $w={53}><BigIcon><CopyToIcon /></BigIcon><Gap $h={2} /><Caption><T w={30}>Copy</T></Caption><Caption><T w={11}>to</T><Down /></Caption></BigBtn>
          <div><Gap $h={15} /><VLine $h={55} /></div>
          <Gap $w={6} />
          <BigBtn $w={48}><BigIcon><DeleteIcon /></BigIcon><Gap $h={2} /><Caption><T w={36}>Delete</T></Caption><Caption><Down /></Caption></BigBtn>
          <BigBtn $w={54}><BigIcon><RenameIcon /></BigIcon><Gap $h={2} /><Caption><T w={46}>Rename</T></Caption></BigBtn>
        </Group>
        <Group $w={171}>
          <BigBtn $w={57}><BigIcon><Folder w={25} h={34} /></BigIcon><Gap $h={2} /><Caption><T w={25}>New</T></Caption><Caption><T w={34}>folder</T></Caption></BigBtn>
          <SmallCol>
            <SmallBtn><SmallIcon $w={23}><Gap $w={1} /><NewItemIcon /></SmallIcon><T w={54.500}>New item</T><Gap $w={5} /><Down /></SmallBtn>
            <SmallBtn><SmallIcon $w={23}><EasyIcon /></SmallIcon><T w={67.500}>Easy access</T><Gap $w={5} /><Down /></SmallBtn>
          </SmallCol>
        </Group>
        <Group $w={151}>
          <BigBtn $w={73}><BigIcon><DocCheck w={29} h={37} /></BigIcon><Gap $h={2} /><Caption><T w={59}>Properties</T></Caption><Caption><Down /></Caption></BigBtn>
          <SmallCol $pt={6} $pitch={27}>
            <SmallBtn><SmallIcon $w={22.500}><OpenIcon /></SmallIcon><T w={31}>Open</T><Gap $w={6} /><Down /></SmallBtn>
            <SmallBtn $muted><SmallIcon $w={22.500}><Gap $w={2} /><EditIcon /></SmallIcon><T w={22}>Edit</T></SmallBtn>
            <SmallBtn><SmallIcon $w={22.500}><Gap $w={2} /><HistoryIcon /></SmallIcon><T w={41}>History</T></SmallBtn>
          </SmallCol>
        </Group>
        <Group $w={129}>
          <Gap $w={8} />
          <SmallCol>
            <SmallBtn><SmallIcon $w={22.500}><Squares on="1111" /></SmallIcon><T w={51}>Select all</T></SmallBtn>
            <SmallBtn><SmallIcon $w={22.500}><Squares on="0000" /></SmallIcon><T w={66}>Select none</T></SmallBtn>
            <SmallBtn><SmallIcon $w={22.500}><Squares on="0110" /></SmallIcon><T w={86}>Invert selection</T></SmallBtn>
          </SmallCol>
        </Group>
      </Ribbon>
      <NavRow $h={44}>
        <Address>
          <T w={46} ml={1067} color="#111">lectures</T><Gap />
          <Chevron w={12} h={8} c="#777" sw={2} /><Gap $w={12} />
          <Refresh><svg width="16" height="16" viewBox="0 0 16 16" fill="none" stroke="#777" strokeWidth="1.700"><path d="M4.500 2.500a6.300 6.300 0 1 0 7.500.3M1.500 2h4.500v4.500" /></svg></Refresh>
        </Address>
        <Search><Lens s={16} c="#777" /><T w={98.500} ml={17} color="#6d6d6d">Search lectures</T></Search>
      </NavRow>
      <Content>
        <Tree><SelectedRow /><TreeRow><DiskIcon /><T w={92} ml={7}>Local Disk (C:)</T></TreeRow></Tree>
        <ScrollTrack><Chevron w={11} h={8} c="#555" sw={2} /></ScrollTrack>
        <PaneEdge />
      </Content>
      <Status $h={28}>
        <T w={54.500}>10 items</T><Gap $w={12} /><VLine $h={14} /><Gap $w={13.500} />
        <T w={99}>1 item selected</T><Gap $w={12} /><VLine $h={14} />
        <Gap />
        <ViewBtn>
          <svg width="18" height="17" viewBox="0 0 18 17" fill="#fff" stroke="#8a8a8a"><path d="M.5.5h4v15h-4zM.5 5.500h4M.5 10.500h4M7 3h5M13 3h5M7 8h5M13 8h5M7 13h5M13 13h5" /><path d="M2 2.500h1v1H2zM2 7.500h1v1H2z" stroke="#2b6cb0" /><path d="M2 12.500h1v1H2z" stroke="#d33" /></svg>
        </ViewBtn>
        <svg width="19" height="15" viewBox="0 0 19 15"><rect x=".5" y=".5" width="18" height="14" fill="#fff" stroke="#9a9a9a" /><path d="M2 2h15v11H2z" fill="#9cc8f5" /><path d="M2 2h15v3L2 4z" fill="#4a86d8" /><path d="M2 6q5 1 8 3l7 1v3H2z" fill="#2f6f6b" /></svg>
      </Status>
    </>
  );
}

function Tk() {
  return (
    <TkWindow>
      <TkTitle $h={38}>
        <Feather /><T w={218} ml={10} size={15.500}>My Restaurant - Invoicing System</T>
        <Gap />
        <WinMin c="#000" /><Gap $w={46} />
        <svg width="13" height="13" fill="none"><path d="M.5.5h11v11H.5z" stroke="#ccc" /></svg>
        <Gap $w={46} /><WinX c="#000" />
      </TkTitle>
      <Header>
        <HeaderFrame>
          <T w={314.500} size={100} lh={120} family={TK} color={AZURE}>Invoicing</T>
          <T w={265} size={100} lh={120} family={TK} color={AZURE}>System</T>
        </HeaderFrame>
      </Header>
      <Body>
        <Left>
          <Menus>
            {menus.map((m) => (
              <Menu key={m.head} $w={m.w}>
                <MenuHead><T w={m.hw} size={30} lh={40} weight={700} family={TK} color={AZURE}>{m.head}</T></MenuHead>
                {m.rows.map(([name, w, val]) => (
                  <Item key={name}>
                    <Check>{val !== "0" && <svg width="9" height="9" viewBox="0 0 9 9"><path d="M1 3.500l2.500 3L8.500 1" fill="none" stroke="#000" strokeWidth="2.200" /></svg>}</Check>
                    <ItemName $w={m.name}><T w={w} dy={1} size={30} lh={46} weight={700} family={TK} color="#000">{name}</T></ItemName>
                    <Entry $on={val !== "0"}>
                      {val === "0"
                        ? <T w={15} dy={4} size={33.500} lh={42} weight={700} family={MONO} color="#6d6d6d">0</T>
                        : <T w={val === "1" ? 9 : 15} dy={1} size={30} lh={42} weight={700} family={TK} color="#000">{val}</T>}
                    </Entry>
                  </Item>
                ))}
              </Menu>
            ))}
          </Menus>
          <Costs>
            {costs.map(([a, aw, b, bw, c, cw, d, dw]) => (
              <React.Fragment key={a}>
                <CostLabel $pl={11}><T w={aw} size={20} lh={33} weight={700} family={TK} color="#fff">{a}</T></CostLabel>
                <CostBox><T w={bw} size={20} lh={33} weight={700} family={TK} color="#000">{b}</T></CostBox>
                <CostLabel><T w={cw} size={20} lh={33} weight={700} family={TK} color="#fff">{c}</T></CostLabel>
                <CostBox><T w={dw} size={20} lh={33} weight={700} family={TK} color="#000">{d}</T></CostBox>
              </React.Fragment>
            ))}
          </Costs>
        </Left>
        <Right>
          <Calc>
            <Display><T w={13} size={25.600} lh={36} weight={700} family={TK} color="#000">4</T></Display>
            <Keys $w={119.600} $h={61.250} $gap={1.700}>
              {keys.map(([k, w]) => (
                <Key key={k}><T w={w} dy={k === "0" ? 3 : 0} size={k === "0" ? 28.500 : 25.600} lh={46} weight={700} family={k === "0" ? MONO : TK} color="#fff">{k}</T></Key>
              ))}
            </Keys>
            <Receipt>
              {receipt.map(([a, aw, b, bw], i) => (
                <Line key={i}>
                  {b ? <LineLabel><T w={aw} ml={0.5} size={20} lh={27.600} weight={700} family={TK} color="#000">{a}</T></LineLabel> : <T w={aw} ml={0.5} dy={a[0] === "*" ? 2.500 : a[0] === "-" ? 1 : 0} size={20} lh={27.600} weight={700} family={TK} color="#000">{a}</T>}
                  {b && <T w={bw!} size={20} lh={27.600} weight={700} family={TK} color="#000">{b}</T>}
                  {i === 9 && <Caret />}
                </Line>
              ))}
            </Receipt>
            <Keys $w={121.700} $h={55} $gap={1}>
              {actions.map(([k, w]) => (
                <Key key={k}><T w={w} dy={-1} size={25.600} lh={46} weight={700} family={TK} color="#fff">{k}</T></Key>
              ))}
            </Keys>
          </Calc>
        </Right>
      </Body>
    </TkWindow>
  );
}

function Tasks() {
  return (
    <Taskbar $h={50}>
      <Start><StartIcon /></Start>
      <TaskSearch><Lens s={20} c="#222" sw={1.200} /><T w={162} ml={16} size={19} lh={26}>Type here to search</T><Gap $w={125} /><Elephant /></TaskSearch>
      <Task><svg width="20" height="20"><circle cx="10" cy="10" r="8.500" fill="none" stroke="#fff" strokeWidth="2.500" /></svg></Task>
      <Task><TaskView /></Task>
      <Task $run="one"><Edge /></Task>
      <Task><Firefox /></Task>
      <Task $run="many"><VSCode /></Task>
      <Task $run="many"><OpenIcon s={28} /></Task>
      <Task $run="many"><Chrome /></Task>
      <Task><OkBadge><T w={17} size={9} lh={9} color="#8a7200">200</T><T w={16} size={9} lh={10} color="#8a7200">OK!</T></OkBadge></Task>
      <Task><Skype /></Task>
      <Task><Office /></Task>
      <Task $active $run="one"><DocWhite /></Task>
      <Task $run="one"><Paint /></Task>
      <Tray>
        <Battery><T w={44} size={17} lh={19}>100%</T></Battery><Nub /><Gap $w={7} />
        <svg width="12" height="18" viewBox="0 0 12 18" fill="#fff"><path d="M2 0h2v5h4V0h2v5h2v3q-1 4-4.500 4.500V18h-3v-5.500Q1 12 0 8V5h2z" /></svg>
        <Gap $w={13} /><Chevron w={17} h={11} c="#fff" sw={1.500} up /><Gap $w={15} />
        <svg width="16" height="17" viewBox="0 0 16 17" fill="none" stroke="#ddd" strokeWidth="1.300"><path d="M1 14A13 13 0 0 1 15 1M4 16A10 10 0 0 1 15 5M8 16.500A7 7 0 0 1 15 9" /><circle cx="13.500" cy="15" r="1.500" fill="#fff" stroke="none" /></svg>
        <Gap $w={11} />
        <svg width="21" height="15" viewBox="0 0 21 15" fill="none" stroke="#fff"><rect x="4.500" y="3.500" width="14" height="10" /><path d="M6.500 5.500h10v6h-10z" fill="#fff" /><path d="M20 6.500v4M1.500 0v2M4.500 0v2M.5 2.500h5v2l-2.500 2v5" /></svg>
        <Gap $w={9} />
        <svg width="22" height="18" viewBox="0 0 22 18" fill="none" stroke="#fff" strokeWidth="1.200"><path d="M1 6.500h3l4-4v13l-4-4H1z" /><path d="M11 6.500q1.500 2.500 0 5" /><path d="M14 4q3.500 5 0 10M17 2q5 7 0 14" stroke="#8c8680" /></svg>
        <Gap $w={13} />
        <svg width="21" height="21" viewBox="0 0 21 21" fill="none" stroke="#fff" strokeWidth="1.400"><path d="M7 17L15 2q3-2 3 1l-7 12zM8 9q-8 1-7 7 2 4 6 3 4-2 6-6 4-5 7-3-1 3-5 2" /></svg>
        <Gap $w={16} />
        <Stack $w={30} $gap={5}><T w={28}>ENG</T><T w={14}>IN</T></Stack><Gap $w={14} />
        <Stack $w={70} $gap={6}><T w={51}>7:41 PM</T><T w={68}>9/17/2022</T></Stack><Gap $w={22} />
        <svg width="21" height="21" viewBox="0 0 21 21"><path d="M0 0h20v16l-8 1-3 3-3-3H0z" fill="#fff" /><path d="M4 4.500h12M4 8.500h12M4 12.500h7" stroke="#42433e" strokeWidth="1.300" /><path d="M16 11q1 5-5 6 3 4 7 2 4-3-2-8z" fill="#fff" stroke="#42433e" /></svg>
        <Gap $w={24} /><VLine $h={50} $c="#777873" /><Gap $w={5} />
      </Tray>
    </Taskbar>
  );
}

export default function App() {
  return (
    <>
      <Global />
      <Desktop>
        <Explorer />
        <Tasks />
        <Tk />
      </Desktop>
    </>
  );
}
